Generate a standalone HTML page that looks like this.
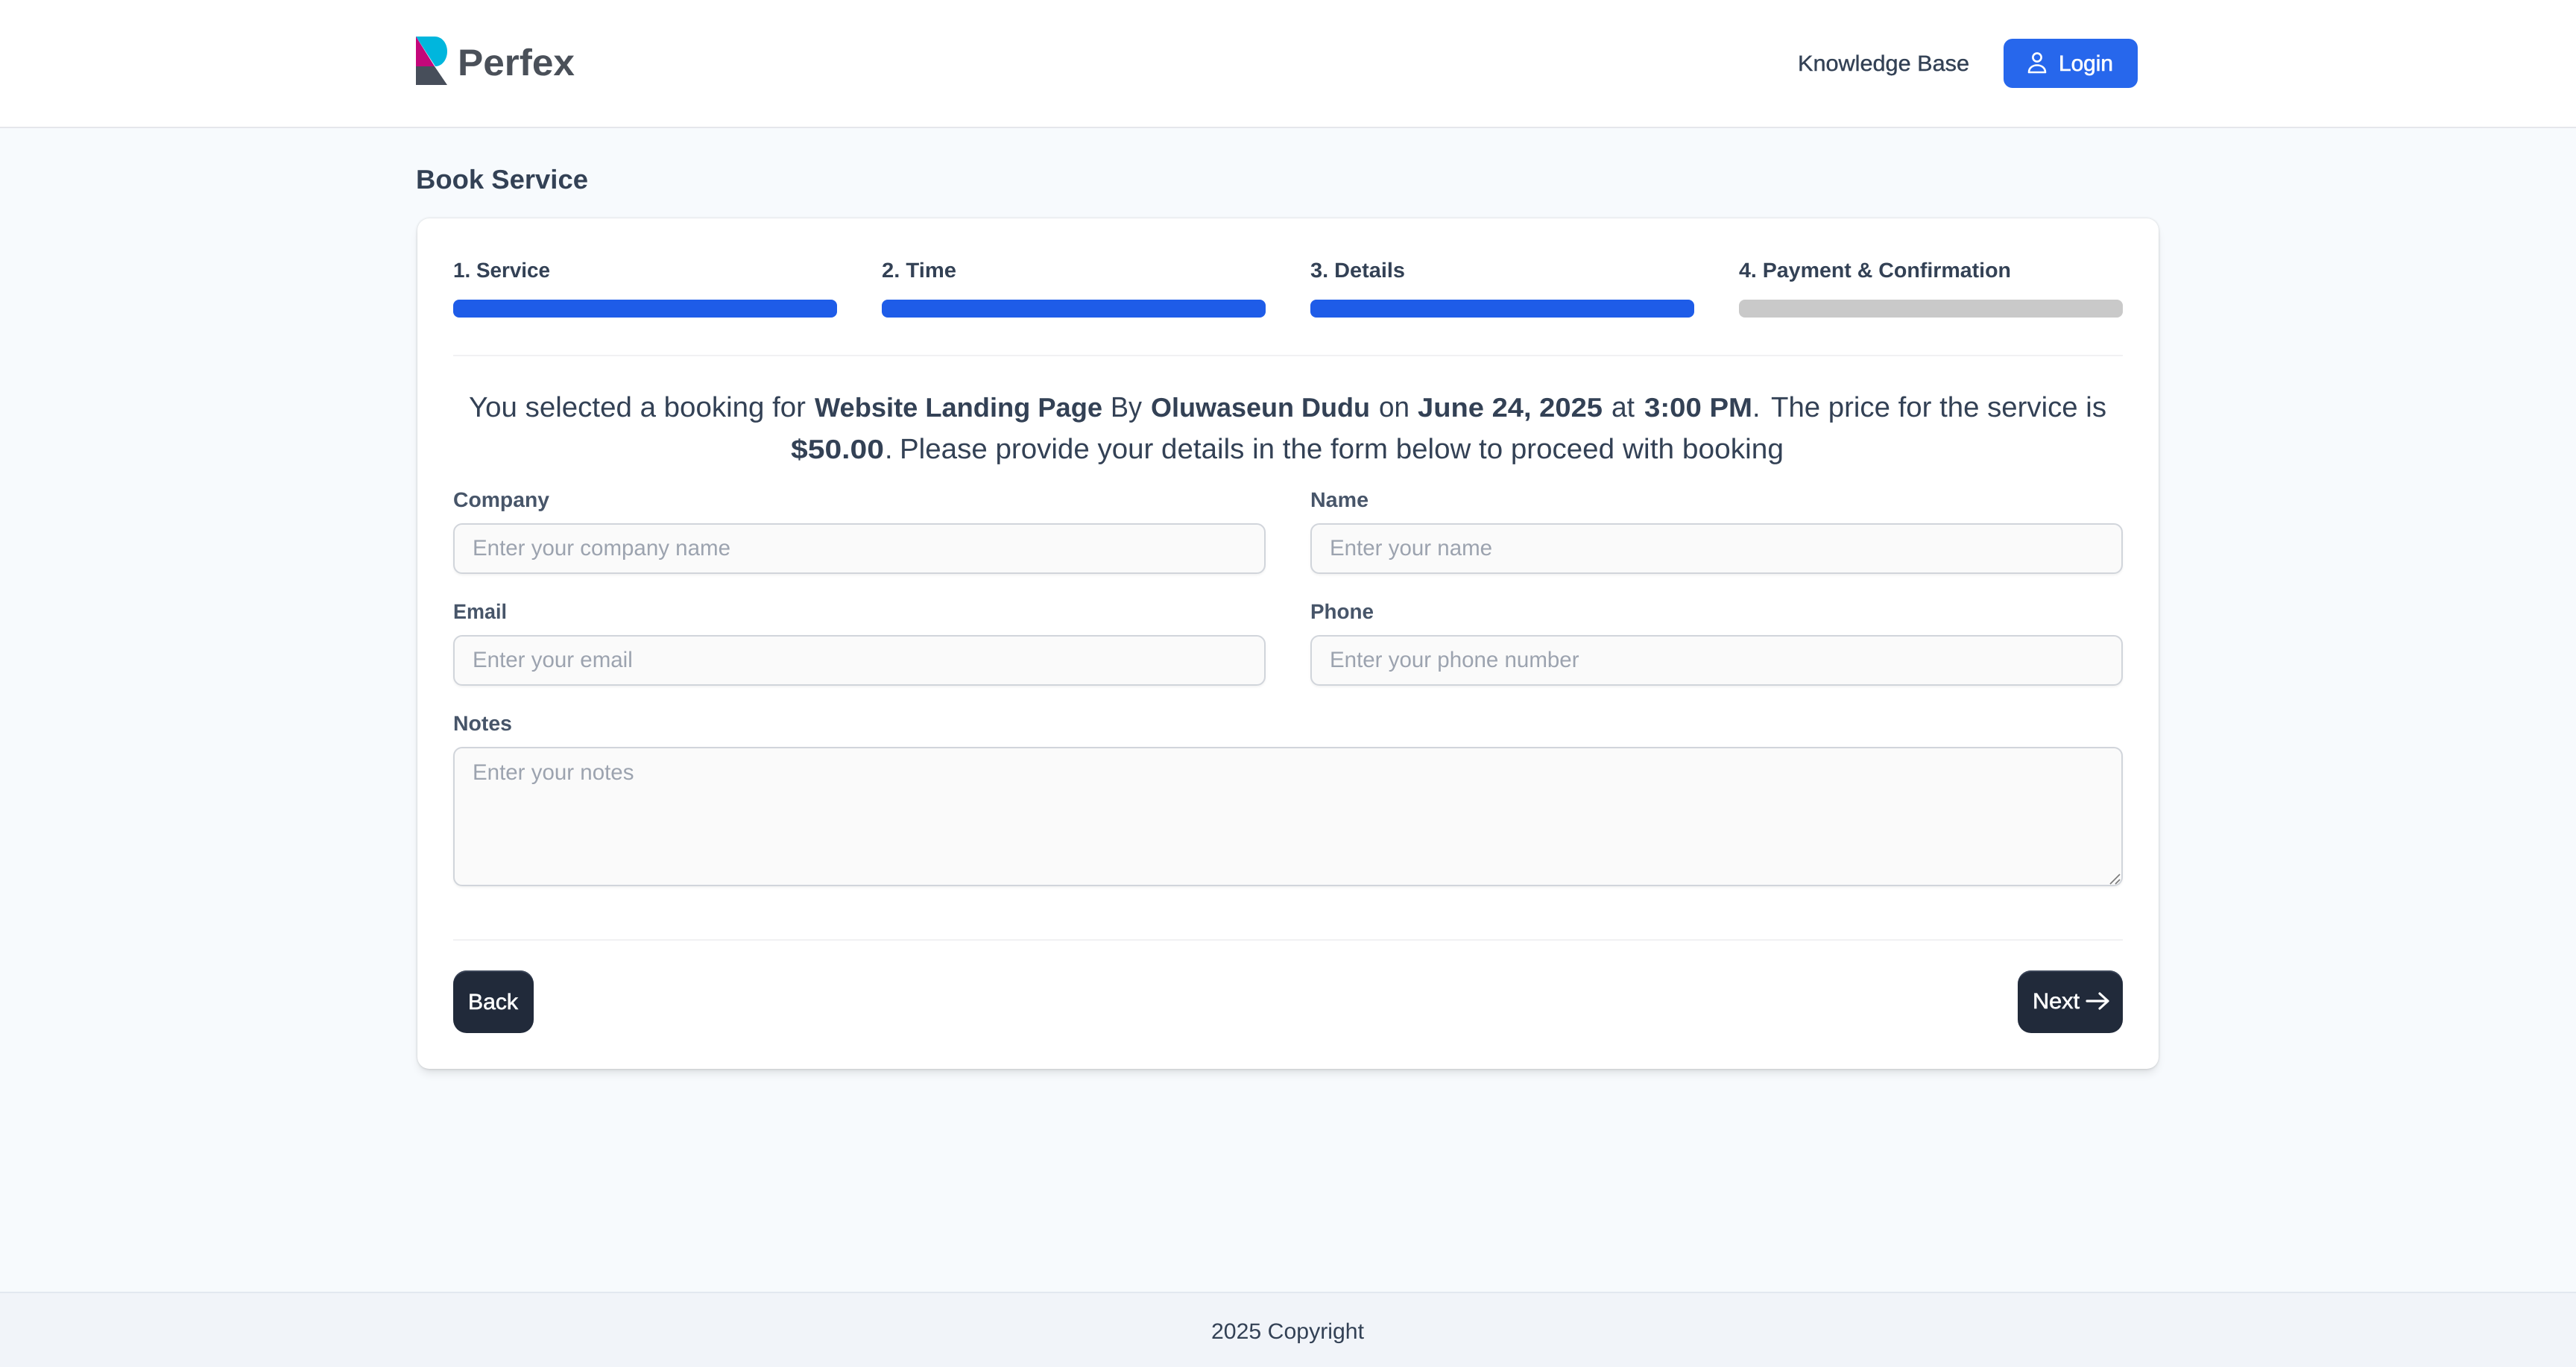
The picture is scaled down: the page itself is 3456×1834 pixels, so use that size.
<!DOCTYPE html>
<html lang="en"><head><meta charset="utf-8"><title>Book Service</title>
<style>
*{box-sizing:border-box}
html,body{margin:0;padding:0;width:3456px;height:1834px;overflow:hidden;background:#f7fafd;font-family:"Liberation Sans",sans-serif}
header{position:absolute;left:0;top:0;width:3456px;height:172px;background:#fff;border-bottom:2px solid #e5e7eb}
.login{position:absolute;left:2688px;top:52px;width:180px;height:66px;background:#2767ec;border-radius:12px}
main .card{position:absolute;left:560px;top:293px;width:2336px;height:1141px;background:#fff;border-radius:16px;box-shadow:0 0 3px rgba(0,0,0,.16),0 8px 12px -2px rgba(0,0,0,.09),0 4px 8px -4px rgba(0,0,0,.08)}
.bar{position:absolute;top:402px;width:515px;height:24px;border-radius:8px;background:#1e5ce8}
.hr{position:absolute;left:608px;width:2240px;height:2px;background:#f1f1f3}
input,textarea{position:absolute;display:block;margin:0;background:#fafafa;border:2px solid #d1d5db;border-radius:12px;padding:0 24px;font:29.5px "Liberation Sans",sans-serif;color:#374151;box-shadow:0 2px 3px rgba(0,0,0,.05);outline:none}
input{height:68px;width:1090px}
textarea{left:608px;top:1002px;width:2240px;height:187px;padding-top:16px;resize:none}
::placeholder{color:#9ca3af;opacity:1}
.btn{position:absolute;top:1302px;height:84px;background:#212a3a;border-radius:18px;box-shadow:inset 0 2px 0 #3b4558}
footer{position:absolute;left:0;top:1733px;width:3456px;height:101px;background:#f1f4f9;border-top:2px solid #e2e8f0}
svg.t{position:absolute;left:0;top:0;pointer-events:none}
svg.t text{font-family:"Liberation Sans",sans-serif;text-rendering:geometricPrecision}
.r{fill:#334155;font-size:38px}
.b{fill:#334155;font-size:36px;font-weight:700}
.s{fill:#334155;font-size:28px;font-weight:700}
.l{fill:#475569;font-size:28px;font-weight:700}
.w{fill:#fff;font-size:29.5px;stroke:#fff;stroke-width:.6px}
.n{fill:#334155;font-size:29.5px}
</style></head>
<body>
<header><div class="login"></div></header>
<main>
<div class="card"></div>
<div class="bar" style="left:608px"></div>
<div class="bar" style="left:1183px"></div>
<div class="bar" style="left:1758px"></div>
<div class="bar" style="left:2333px;background:#c9c9c9"></div>
<div class="hr" style="top:476px"></div>
<form>
<input style="left:608px;top:702px" placeholder="Enter your company name">
<input style="left:1758px;top:702px" placeholder="Enter your name">
<input style="left:608px;top:852px" placeholder="Enter your email">
<input style="left:1758px;top:852px" placeholder="Enter your phone number">
<textarea placeholder="Enter your notes"></textarea>
</form>
<div class="hr" style="top:1260px"></div>
<div class="btn" style="left:608px;width:108px"></div>
<div class="btn" style="left:2707px;width:141px"></div>
</main>
<footer></footer>
<svg class="t" width="3456" height="1834" viewBox="0 0 3456 1834" xmlns="http://www.w3.org/2000/svg">
<!-- logo -->
<path d="M558 49H583C593 49 600 58 600 69C600 80 593 89 584 89L558 49Z" fill="#00b6dd"/>
<path d="M558 49L583 89H558Z" fill="#c4077a"/>
<path d="M558 89H583L600 114H558Z" fill="#474e5a"/>
<text x="614" y="101" font-size="50" font-weight="700" fill="#4a5059" textLength="157" lengthAdjust="spacingAndGlyphs">Perfex</text>
<!-- nav -->
<text class="n" x="2412" y="95" textLength="230" lengthAdjust="spacingAndGlyphs" stroke="#334155" stroke-width=".4">Knowledge Base</text>
<g fill="none" stroke="#fff" stroke-width="2.6" stroke-linecap="round" stroke-linejoin="round">
<circle cx="2733" cy="77" r="5.6"/>
<path d="M2722 97C2722 91 2727 87.500 2733 87.500C2739 87.500 2744 91 2744 97Z"/>
</g>
<text class="w" x="2762" y="95" textLength="73" lengthAdjust="spacingAndGlyphs">Login</text>
<!-- title -->
<text class="b" x="558" y="253" textLength="231" lengthAdjust="spacingAndGlyphs">Book Service</text>
<!-- steps -->
<text class="s" x="608" y="372" textLength="130" lengthAdjust="spacingAndGlyphs">1. Service</text>
<text class="s" x="1183" y="372" textLength="100" lengthAdjust="spacingAndGlyphs">2. Time</text>
<text class="s" x="1758" y="372" textLength="127" lengthAdjust="spacingAndGlyphs">3. Details</text>
<text class="s" x="2333" y="372" textLength="365" lengthAdjust="spacingAndGlyphs">4. Payment &amp; Confirmation</text>
<!-- paragraph -->
<text class="r" x="629" y="559" textLength="452" lengthAdjust="spacingAndGlyphs">You selected a booking for</text>
<text class="b" x="1093" y="559" textLength="386" lengthAdjust="spacingAndGlyphs">Website Landing Page</text>
<text class="r" x="1490" y="559" textLength="42" lengthAdjust="spacingAndGlyphs">By</text>
<text class="b" x="1544" y="559" textLength="294" lengthAdjust="spacingAndGlyphs">Oluwaseun Dudu</text>
<text class="r" x="1850" y="559" textLength="41" lengthAdjust="spacingAndGlyphs">on</text>
<text class="b" x="1902" y="559" textLength="248" lengthAdjust="spacingAndGlyphs">June 24, 2025</text>
<text class="r" x="2162" y="559" textLength="31" lengthAdjust="spacingAndGlyphs">at</text>
<text class="b" x="2206" y="559" textLength="145" lengthAdjust="spacingAndGlyphs">3:00 PM</text>
<text class="r" x="2351" y="559">.</text>
<text class="r" x="2376" y="559" textLength="450" lengthAdjust="spacingAndGlyphs">The price for the service is</text>
<text class="b" x="1061" y="615" textLength="125" lengthAdjust="spacingAndGlyphs">$50.00</text>
<text class="r" x="1187" y="615">.</text>
<text class="r" x="1207" y="615" textLength="959" lengthAdjust="spacingAndGlyphs">Please provide your details in the form below to proceed</text>
<text class="r" x="2177" y="615" textLength="216" lengthAdjust="spacingAndGlyphs">with booking</text>
<!-- labels -->
<text class="l" x="608" y="680" textLength="129" lengthAdjust="spacingAndGlyphs">Company</text>
<text class="l" x="1758" y="680" textLength="78" lengthAdjust="spacingAndGlyphs">Name</text>
<text class="l" x="608" y="830" textLength="72" lengthAdjust="spacingAndGlyphs">Email</text>
<text class="l" x="1758" y="830" textLength="85" lengthAdjust="spacingAndGlyphs">Phone</text>
<text class="l" x="608" y="980" textLength="79" lengthAdjust="spacingAndGlyphs">Notes</text>
<!-- resize handle -->
<g stroke="#7a7a7a" stroke-width="1.600" fill="none">
<path d="M2831 1186L2844 1173M2838 1186L2844 1180"/>
</g>
<!-- buttons -->
<text class="w" x="628" y="1354" textLength="67" lengthAdjust="spacingAndGlyphs">Back</text>
<text class="w" x="2727" y="1353" textLength="63" lengthAdjust="spacingAndGlyphs">Next</text>
<path d="M2800 1343H2827M2817 1333L2828 1343L2817 1353" fill="none" stroke="#fff" stroke-width="3.200" stroke-linecap="round" stroke-linejoin="round"/>
<!-- footer -->
<text class="n" x="1625" y="1796" textLength="205" lengthAdjust="spacingAndGlyphs">2025 Copyright</text>
</svg>
</body></html>
